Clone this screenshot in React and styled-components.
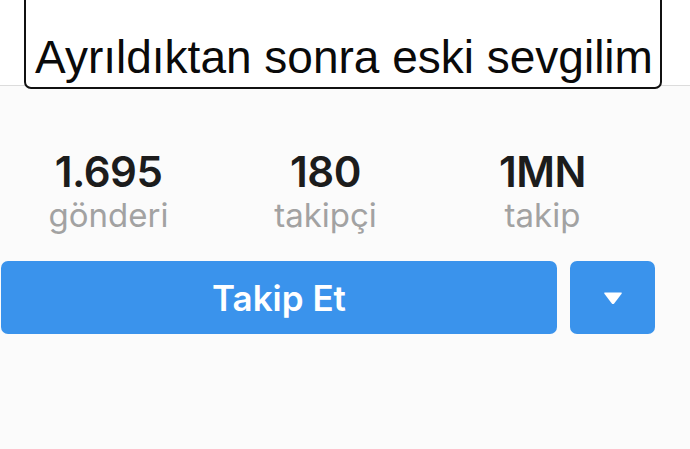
import styled, { createGlobalStyle } from "styled-components";

const GlobalStyle = createGlobalStyle`
  html, body {
    margin: 0;
    padding: 0;
    background-color: #fbfbfb;
    overflow: hidden;
  }
`;

const Page = styled.div`
  position: relative;
  width: 690px;
  height: 449px;
  background-color: #fbfbfb;
  font-family: Inter, "Liberation Sans", sans-serif;
  overflow: hidden;
`;

const Header = styled.div`
  height: 85px;
  background-color: #ffffff;
  border-bottom: 1px solid #dcdcdc;
`;

const Caption = styled.div`
  position: absolute;
  top: -12px;
  left: 24px;
  width: 634px;
  height: 97px;
  border: 2px solid #111111;
  border-radius: 7px;
  background-color: #ffffff;
  display: flex;
  align-items: flex-end;
  justify-content: center;
  box-sizing: content-box;
`;

const CaptionText = styled.span`
  font-family: "Liberation Sans", Arial, sans-serif;
  font-size: 46px;
  line-height: 53px;
  color: #0a0a0a;
  white-space: nowrap;
  margin: 0 0 3px 2px;
`;

const Stats = styled.div`
  display: grid;
  grid-template-columns: repeat(3, 217px);
  padding-top: 65px;
`;

const Stat = styled.div`
  display: flex;
  flex-direction: column;
  align-items: center;
  gap: 6px;
`;

const Count = styled.span`
  font-size: 42px;
  line-height: 42px;
  font-weight: 600;
  color: #1c1c1c;
  letter-spacing: -0.5px;
`;

const Label = styled.span`
  font-size: 33px;
  line-height: 33px;
  font-weight: 400;
  color: #a2a2a2;
`;

const Actions = styled.div`
  display: flex;
  gap: 13px;
  padding: 29px 0 0 1px;
`;

const Button = styled.button`
  width: ${(p) => p.$width}px;
  height: 73px;
  border: none;
  border-radius: 7px;
  background-color: #3a93ec;
  color: #ffffff;
  font-family: Inter, "Liberation Sans", sans-serif;
  font-size: 35px;
  font-weight: 600;
  display: flex;
  align-items: center;
  justify-content: center;
  padding: 0;
`;

const stats = [
  { count: "1.695", label: "gönderi" },
  { count: "180", label: "takipçi" },
  { count: "1MN", label: "takip" },
];

export default function App() {
  return (
    <Page>
      <GlobalStyle />
      <Header />
      <Caption>
        <CaptionText>Ayrıldıktan sonra eski sevgilim</CaptionText>
      </Caption>
      <Stats>
        {stats.map((s) => (
          <Stat key={s.label}>
            <Count>{s.count}</Count>
            <Label>{s.label}</Label>
          </Stat>
        ))}
      </Stats>
      <Actions>
        <Button $width={556}>Takip Et</Button>
        <Button $width={85}>
          <svg width="20" height="14" viewBox="0 0 20 14">
            <path
              d="M2 1.5 H18 Q19.5 1.5 18.6 2.8 L11.2 12.4 Q10 13.8 8.8 12.4 L1.4 2.8 Q0.5 1.5 2 1.5 Z"
              fill="#ffffff"
            />
          </svg>
        </Button>
      </Actions>
    </Page>
  );
}
